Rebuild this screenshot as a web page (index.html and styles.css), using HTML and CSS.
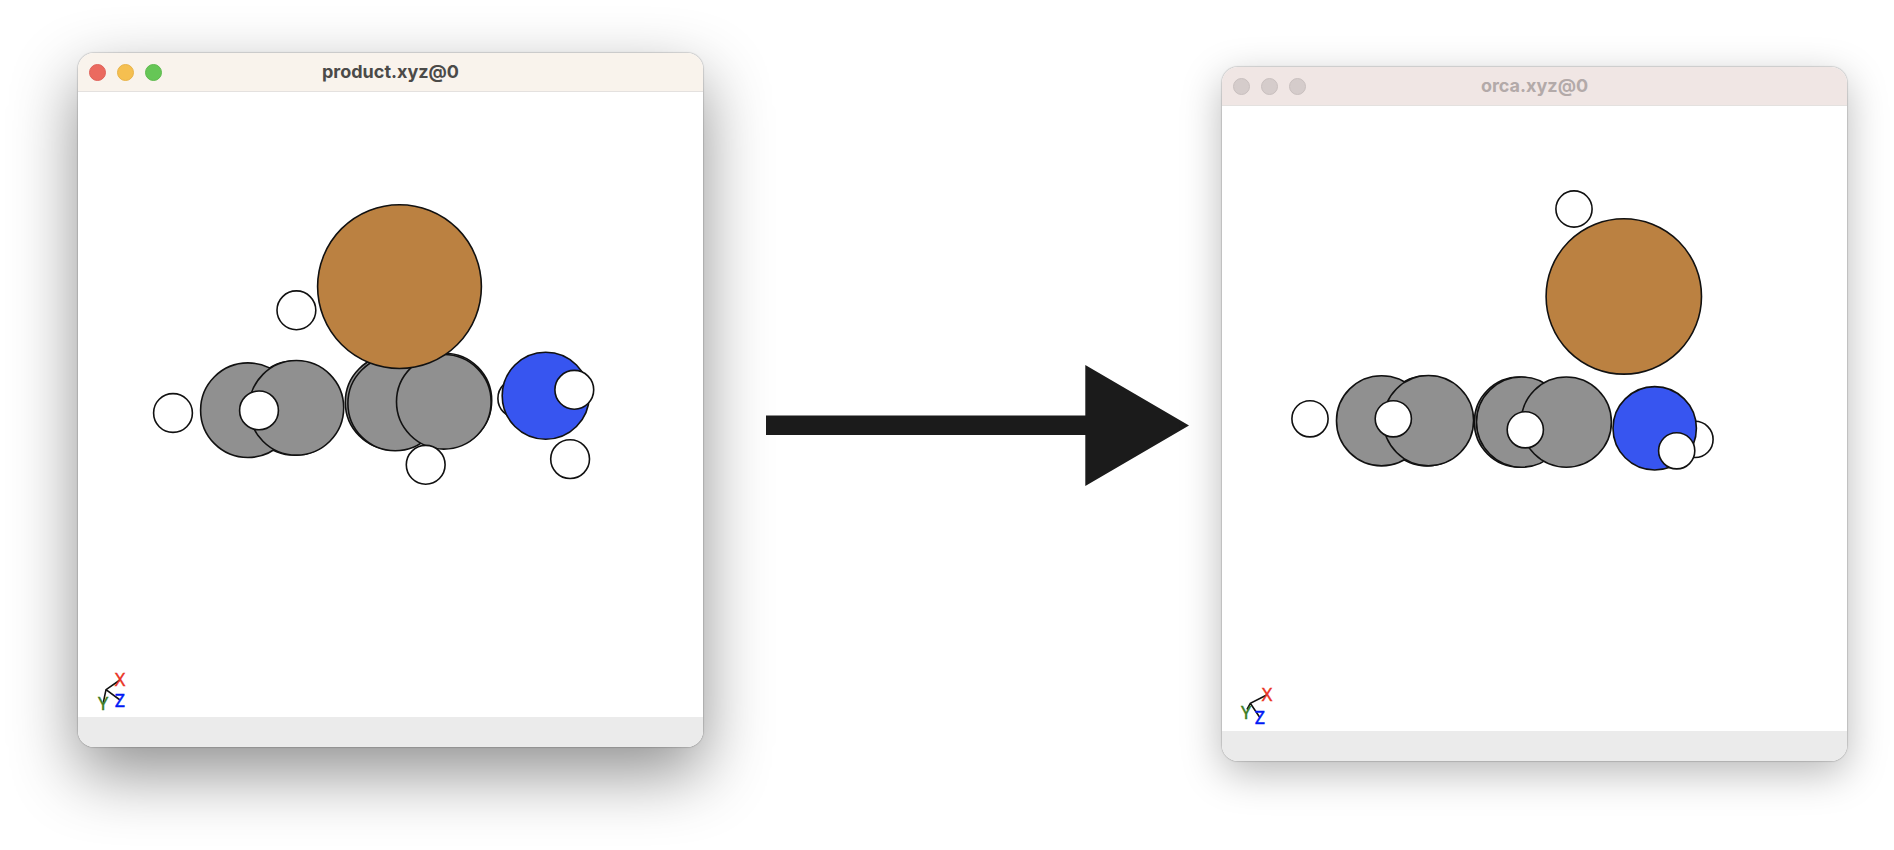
FILE: index.html
```html
<!DOCTYPE html>
<html lang="en">
<head>
<meta charset="utf-8">
<title>product.xyz to orca.xyz</title>
<link rel="stylesheet" href="styles.css">
</head>
<body>
<main class="stage">
  <section class="window window-active" aria-labelledby="title-product">
    <header class="titlebar">
      <div class="controls">
        <button class="control close" type="button" aria-label="Close"></button>
        <button class="control minimize" type="button" aria-label="Minimize"></button>
        <button class="control expand" type="button" aria-label="Zoom"></button>
      </div>
      <h1 class="title" id="title-product">product.xyz@0</h1>
    </header>
    <svg class="canvas" viewBox="0 -1 625 625" role="img" aria-label="Product molecule">
      <g class="atoms">
        <circle class="h" cx="95" cy="320" r="19.4"/>
        <circle class="h" cx="218.4" cy="217.3" r="19.4"/>
        <circle class="c" cx="216.8" cy="315" r="47.3"/>
        <circle class="c" cx="169.9" cy="317.2" r="47.3"/>
        <circle class="c" cx="218.4" cy="314.8" r="47.3"/>
        <circle class="h" cx="181" cy="317.4" r="19.4"/>
        <circle class="c" cx="314.6" cy="309.2" r="47.3"/>
        <circle class="c" cx="366.4" cy="307.6" r="47.3"/>
        <circle class="c" cx="317.2" cy="310.4" r="47.3"/>
        <circle class="c" cx="365.8" cy="308.8" r="47.3"/>
        <circle class="h" cx="347.7" cy="371.8" r="19.4"/>
        <circle class="br" cx="321.5" cy="193.6" r="81.9"/>
        <circle class="h" cx="439.3" cy="305.4" r="19.4"/>
        <circle class="n" cx="467.7" cy="302.7" r="43.5"/>
        <circle class="h" cx="496.3" cy="296.8" r="19.4"/>
        <circle class="h" cx="492.1" cy="366.1" r="19.4"/>
      </g>
      <path class="axes" d="M42 587 28 596.7 25.3 609.7M28 596.7 42 607"/>
      <text class="axis x" x="42" y="593">X</text>
      <text class="axis y" x="25" y="617">Y</text>
      <text class="axis z" x="42" y="614">Z</text>
    </svg>
    <footer class="statusbar"></footer>
  </section>

  <svg class="arrow" viewBox="0 0 423 121" role="img" aria-label="leads to">
    <path d="M0 50.5H319.3V0L423 60.5 319.3 121V70H0Z"/>
  </svg>

  <section class="window window-inactive" aria-labelledby="title-orca">
    <header class="titlebar">
      <div class="controls">
        <button class="control" type="button" aria-label="Close"></button>
        <button class="control" type="button" aria-label="Minimize"></button>
        <button class="control" type="button" aria-label="Zoom"></button>
      </div>
      <h1 class="title" id="title-orca">orca.xyz@0</h1>
    </header>
    <svg class="canvas" viewBox="0 0 625 625" role="img" aria-label="Orca molecule">
      <g class="atoms">
        <circle class="h" cx="88" cy="312.8" r="18.1"/>
        <circle class="h" cx="352" cy="103" r="18.1"/>
        <circle class="c" cx="204.8" cy="314.9" r="45.1"/>
        <circle class="c" cx="159.6" cy="314.8" r="45.1"/>
        <circle class="c" cx="206.5" cy="314.6" r="45.1"/>
        <circle class="h" cx="171.3" cy="312.8" r="18.1"/>
        <circle class="c" cx="297.4" cy="316.1" r="45.1"/>
        <circle class="c" cx="299.6" cy="316.1" r="45.1"/>
        <circle class="c" cx="344.3" cy="316.1" r="45.1"/>
        <circle class="h" cx="303.3" cy="323.8" r="18.1"/>
        <circle class="br" cx="401.8" cy="190.4" r="77.7"/>
        <circle class="h" cx="473" cy="333.4" r="18.1"/>
        <circle class="n" cx="432.7" cy="322.3" r="41.7"/>
        <circle class="h" cx="454.7" cy="344.8" r="18.1"/>
      </g>
      <path class="axes" d="M44.7 589 28.3 597.3 25 603.5M28.3 597.3 38 611.7"/>
      <text class="axis x" x="45" y="595">X</text>
      <text class="axis y" x="24" y="613">Y</text>
      <text class="axis z" x="38" y="618">Z</text>
    </svg>
    <footer class="statusbar"></footer>
  </section>
</main>
</body>
</html>
```
FILE: styles.css
```css
* {
  box-sizing: border-box;
}

body {
  margin: 0;
  background: #fff;
  font-family: Inter, "Liberation Sans", sans-serif;
}

.stage {
  display: grid;
  grid-template-columns: 625fr 519fr 625fr;
  align-items: start;
  min-height: 100vh;
  padding: 0 47px 0 78px;
  overflow: hidden;
}

.window {
  border-radius: 16px;
  background: #fff;
}

.window-active {
  margin-top: 53px;
  box-shadow: 0 0 1px 1px rgba(0, 0, 0, 0.14), 0 26px 66px rgba(0, 0, 0, 0.44);
}

.window-inactive {
  margin-top: 67px;
  box-shadow: 0 0 1px 1px rgba(0, 0, 0, 0.14), 0 12px 40px rgba(0, 0, 0, 0.28);
}

.titlebar {
  display: grid;
  grid-template-columns: 1fr auto 1fr;
  align-items: center;
  height: 39px;
  padding: 0 11px;
  border-bottom: 1px solid #e4e1df;
  border-radius: 16px 16px 0 0;
}

.window-active .titlebar {
  background: #f9f3ec;
}

.window-inactive .titlebar {
  background: #f0e6e4;
}

.controls {
  display: flex;
  gap: 11px;
}

.control {
  width: 17px;
  height: 17px;
  padding: 0;
  border: 1px solid #c9c0bf;
  border-radius: 50%;
  background: #d5cccb;
}

.close {
  border-color: #e0625a;
  background: #eb6a5f;
}

.minimize {
  border-color: #e8b348;
  background: #f5bf50;
}

.expand {
  border-color: #5fba4e;
  background: #66c656;
}

.title {
  margin: 0;
  color: #4b4a48;
  font-size: 18px;
  font-weight: 700;
  line-height: 24px;
}

.window-inactive .title {
  color: #b3aaa9;
}

.canvas {
  display: block;
  width: 100%;
}

.atoms {
  stroke: #111;
  stroke-width: 1.6;
}

.h {
  fill: #fff;
}

.c {
  fill: #909090;
}

.n {
  fill: #3755f0;
}

.br {
  fill: #bb8141;
}

.axes {
  fill: none;
  stroke: #111;
  stroke-width: 1.6;
}

.axis {
  font-family: "Noto Sans", sans-serif;
  font-size: 18px;
  font-weight: 400;
  text-anchor: middle;
}

.x {
  fill: #ea3323;
  stroke: #ea3323;
  stroke-width: 0.4;
}

.y {
  fill: #3d7d22;
  stroke: #3d7d22;
  stroke-width: 0.4;
}

.z {
  fill: #0019f5;
  stroke: #0019f5;
  stroke-width: 0.4;
}

.statusbar {
  height: 30px;
  border-radius: 0 0 16px 16px;
  background: #ebebeb;
}

.arrow {
  align-self: center;
  width: 100%;
  padding: 0 33px 0 63px;
  fill: #1b1b1b;
}
```
